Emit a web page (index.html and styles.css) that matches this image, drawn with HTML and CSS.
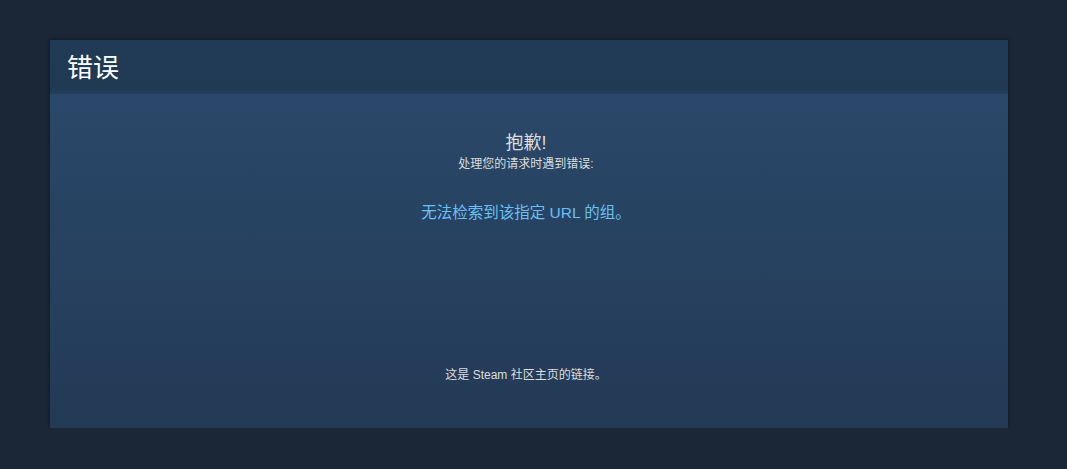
FILE: index.html
```html
<!DOCTYPE html>
<html lang="zh">
<head>
<meta charset="utf-8">
<link rel="stylesheet" href="styles.css">
</head>
<body>
<div class="page">
  <div class="panel">
    <div class="panel-header"><h2>错误</h2></div>
    <div class="panel-body">
      <div class="sorry">抱歉!</div>
      <div class="sub">处理您的请求时遇到错误:</div>
      <div class="msg">无法检索到该指定 URL 的组。</div>
      <div class="spacer"></div>
      <div class="link">这是 Steam 社区主页的链接。</div>
    </div>
  </div>
</div>
</body>
</html>
```
FILE: styles.css
```css
html, body {
  margin: 0;
  padding: 0;
  background: #1b2637;
  font-family: Arial, "Liberation Sans", "Noto Sans CJK SC", sans-serif;
  color: #dcdedf;
}
.page {
  padding: 40px 59px 0 50px;
}
.panel {
  width: 958px;
  box-shadow: 0 0 4px rgba(0,0,0,0.45);
}
.panel-header {
  height: 54px;
  background: linear-gradient(to bottom, #213a55 0%, #203a54 90%, #233f5b 100%);
  display: flex;
  align-items: center;
  padding-left: 17px;
}
.panel-header h2 {
  margin: 0;
  font-size: 26px;
  font-weight: normal;
  color: #ffffff;
  line-height: 1;
  padding-top: 2px;
}
.panel-body {
  height: 334px;
  background: linear-gradient(to bottom, #2a4869 0%, #233a56 100%);
  display: flex;
  flex-direction: column;
  align-items: center;
  box-sizing: border-box;
  padding-right: 6px;
}
.sorry {
  margin-top: 38px;
  font-size: 18px;
  line-height: 22px;
  color: #dcdedf;
}
.sub {
  margin-top: 2px;
  font-size: 12px;
  line-height: 16px;
  color: #dcdedf;
}
.msg {
  margin-top: 31px;
  font-size: 15.5px;
  line-height: 20px;
  color: #67c1f5;
}
.spacer {
  flex: 1;
}
.link {
  font-size: 12px;
  line-height: 16px;
  color: #dcdedf;
  margin-bottom: 45px;
}
```
